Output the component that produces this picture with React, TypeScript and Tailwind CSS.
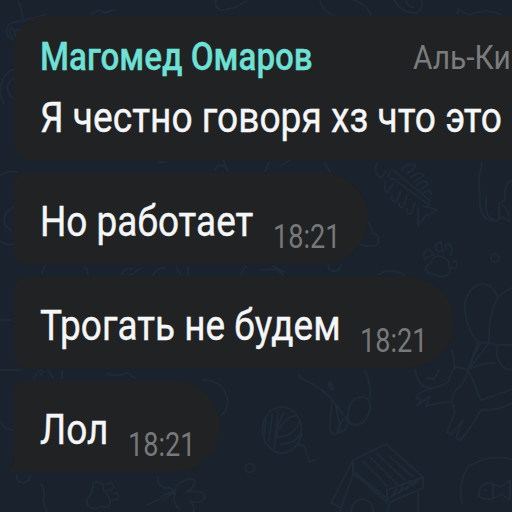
import type { ReactNode } from "react";
import { clsx } from "clsx";

interface Message {
  text: string;
  time: string;
  bubble: string;
  textWidth: string;
}

const messages: Message[] = [
  { text: "Но работает", time: "18:21", bubble: "w-[354px] rounded-l-[12px]", textWidth: "w-[233px]" },
  { text: "Трогать не будем", time: "18:21", bubble: "w-[440px] rounded-l-[12px]", textWidth: "w-[320px]" },
  { text: "Лол", time: "18:21", bubble: "w-[206px] rounded-tl-[12px]", textWidth: "w-[88px]" },
];

export default function App() {
  return (
    <main className="relative h-[512px] w-[512px] overflow-hidden bg-[#19222d] font-['Roboto','Noto_Sans',sans-serif]">
      <Wallpaper />
      <div className="relative flex flex-col gap-[13px] pt-[16px] pl-[14px]">
        <section className="h-[144px] w-[560px] rounded-l-[14px] rounded-tl-[32px] bg-[#202223] pt-[19px] pl-[26px]">
          <header className="flex h-[44px] items-start">
            <div className="w-[373px] shrink-0">
              <Line className="scale-x-[0.873] text-[38px] leading-[44px] font-medium text-[#6ee0d5] [-webkit-text-stroke:0.3px]">Магомед Омаров</Line>
            </div>
            <Line className="scale-x-[0.88] text-[34px] leading-[44px] text-[#7b7c7d]">Аль-Ки</Line>
          </header>
          <Line className="mt-[15px] scale-x-[0.884] text-[42px] leading-[48px] text-[#f5f6f7] [-webkit-text-stroke:0.4px]">
            Я честно говоря хз что это
          </Line>
        </section>

        {messages.map((message, i) => (
          <MessageBubble key={message.text} message={message} tail={i === messages.length - 1} />
        ))}
      </div>
    </main>
  );
}

function Line({ className, children }: { className: string; children: ReactNode }) {
  return <p className={clsx("w-max origin-left whitespace-nowrap", className)}>{children}</p>;
}

function MessageBubble({ message, tail }: { message: Message; tail: boolean }) {
  return (
    <section className={clsx("relative flex h-[91px] rounded-r-[46px] bg-[#202223] pt-[25px] pl-[26px]", message.bubble)}>
      {tail && (
        <svg className="absolute bottom-0 -left-[5px] h-[20px] w-[6px]" viewBox="0 0 6 20">
          <path d="M6 0H5C5 10 4 16 0 19V20H6Z" fill="#202223" />
        </svg>
      )}
      <div className={clsx("shrink-0", message.textWidth)}>
        <Line className="scale-x-[0.88] text-[42px] leading-[48px] text-[#f5f6f7] [-webkit-text-stroke:0.4px]">{message.text}</Line>
      </div>
      <Line className="mt-[19px] scale-x-[0.835] text-[32.5px] leading-[40px] text-[#777879]">{message.time}</Line>
    </section>
  );
}

// Faint cat-themed doodles behind the chat
function Wallpaper() {
  return (
    <svg className="absolute inset-0 h-full w-full" viewBox="0 0 512 512" fill="none" stroke="#1e2a35" strokeWidth="2" strokeLinecap="round" strokeLinejoin="round">
      {/* top edge */}
      <path d="M19 3Q24 15 22 21L45 15M22 21Q8 22 7 28Q4 36 14 40Q7 31 11 28Q15 30 15 36Q16 27 20 30L21 35M216 0Q214 9 222 10Q237 9 247 0M91 14L99 10L105 13L113 10M320 0Q323 13 334 15M353 0Q367 4 371 15M394 0Q401 13 416 13Q425 8 421 0M406 0Q407 8 414 7M458 14V9L468 15Q487 8 500 14" />
      {/* left edge */}
      <path d="M14 69Q4 73 1 85Q-2 94 4 103M14 78Q5 84 8 91Q9 96 14 99M0 175Q10 170 17 172M14 207Q5 210 4 220Q4 227 11 230M0 241Q7 246 14 244M0 320H12M0 370H20M0 421Q5 430 13 430" />
      {/* strips between bubbles */}
      <path d="M158 162L166 162M215 170Q219 162 224 167M223 160L228 171M265 171L269 162M280 166L290 160M325 163L330 172M42 273L45 266M84 267Q88 269 88 274M122 274Q125 267 132 269M130 275L141 268M153 275Q158 266 165 268M176 267L181 275M188 267V275M240 275L246 266M263 270L276 269L283 275M273 266L284 272M328 265Q329 272 336 271Q341 269 341 265M379 274Q391 267 404 275M34 378Q40 367 43 371L40 376M48 370L53 378M62 370V378M108 374Q119 377 127 373L135 378" />
      {/* fish bone */}
      <path d="M377 163Q373 171 380 178Q384 176 386 171M390 172Q387 180 394 179L429 205M392 169L430 201M386 181Q383 189 387 193L393 184M392 195Q390 201 396 202L401 191M399 203Q398 208 403 207L407 196M407 209Q405 215 411 214L415 203M402 170Q407 162 415 165Q416 169 407 173M410 178Q420 171 424 175L414 182M417 185Q427 178 428 184L420 190M422 194Q432 187 431 194M418 208L418 226L426 215L429 215L437 210L424 206" />
      {/* cat legs */}
      <path d="M482 163L479 177L480 206Q483 220 490 220L496 221L502 217L510 221M486 197V209Q488 219 493 219M512 180Q503 185 505 200L499 204V218M503 205Q508 209 509 216" />
      {/* toy peeking out from behind the bubble */}
      <path d="M369 223L373 233Q380 234 378 244Q375 248 361 245" />
      {/* paw */}
      <path d="M431 263Q432 256 439 256Q447 257 449 263L450 272Q447 278 439 276L427 272Q423 266 431 263ZM425 259Q421 252 429 249L434 254ZM435 248Q435 243 441 242L443 251L438 252ZM446 249Q444 243 449 244Q454 249 451 255M453 262Q457 259 457 266Q454 271 450 267" />
      <circle cx="495" cy="258" r="4" />
      {/* balloons and the cat holding them */}
      <path d="M478 342Q464 326 465 303Q469 285 483 284Q493 285 498 297Q488 315 489 343L478 342L468 370M489 343L468 370M512 288Q501 292 497 299M489 343L497 345M512 345H499Q493 354 502 366Q507 371 512 369M480 344L470 364M468 370Q482 362 495 363M468 370L457 367Q450 371 449 381Q440 388 429 388Q418 386 415 370M452 350Q455 359 454 369M431 389Q421 390 416 398L421 400L417 406L430 396L426 406Q438 402 451 402L455 391Q465 384 468 370L474 383Q477 392 481 400Q495 396 512 389M481 410Q498 411 512 403M452 403L455 412L447 432L451 435L463 420L456 438L460 440Q472 427 481 410M427 378L434 379L439 370" />
      {/* stretching cat */}
      <path d="M299 375Q297 376 303 379Q319 386 332 399L347 420L352 424M365 370Q372 387 370 398M348 421Q347 399 360 397Q371 396 370 409Q367 423 357 425Q350 425 348 421M332 400L330 426Q330 436 336 434L343 419M335 403L340 425L338 433L345 430L348 423" />
      <ellipse cx="331" cy="386" rx="2" ry="4" transform="rotate(-25 331 386)" fill="#1e2a35" />
      {/* yarn ball */}
      <ellipse cx="282" cy="430" rx="19.5" ry="23" />
      <path d="M266 420L264 436M272 415L269 441M278 411L274 449M284 413Q276 425 277 437M279 429Q287 415 296 416M278 437Q292 437 299 423M281 444Q297 444 301 431M295 446Q306 442 306 452L309 462L315 460" />
      {/* cat house */}
      <path d="M386 444L353 460L331 503L341 508L354 472L388 499L423 477L386 444M353 460V473L387 502V490L423 477V488L390 502L387 512M342 509L338 512M418 490V512M351 512Q352 500 363 499Q374 502 373 512M363 461L387 486M370 457L397 484M377 454L405 480M389 456L413 477M392 495L397 489M399 493L403 486M406 490L411 483M413 486L418 481" />
      {/* fish bowl */}
      <path d="M462 503Q458 480 469 466Q488 454 512 459M479 492Q481 482 491 483L501 487L510 480V500L501 494Q490 502 481 498Q478 496 479 492M485 490H486M493 484V497" />
      {/* bottom left items */}
      <path d="M203 380Q218 380 224 390Q232 405 222 415M17 475Q16 483 24 483Q30 481 30 475M41 484Q46 491 43 501L47 512M93 487Q92 482 98 482Q104 482 103 490Q111 496 110 504Q108 509 101 506Q94 511 88 506Q85 498 91 495ZM107 484Q112 481 114 487Q111 492 107 490M114 493Q119 492 118 499L113 500" />
      <path d="M158 477Q157 485 165 488Q172 487 175 493Q176 483 184 481Q192 477 195 481Q194 488 187 492Q204 489 205 497Q202 505 190 501Q196 508 193 512M175 493Q164 492 160 499L147 505M175 493Q172 503 180 509M163 500L171 494" />
      <circle cx="250" cy="468" r="4.5" />
    </svg>
  );
}
